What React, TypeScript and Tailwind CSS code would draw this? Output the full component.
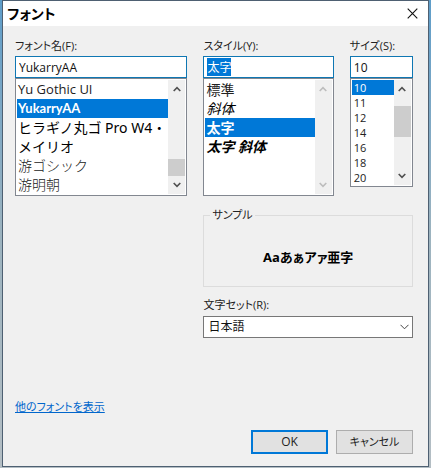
import { useEffect, useRef, useState } from "react";
import type { ReactNode } from "react";

type Item = { text: string; look?: string };

const fontItems: Item[] = [
  { text: "Yu Gothic UI", look: "text-[13px] text-[#222]" },
  { text: "YukarryAA", look: "font-['Lato','Noto_Sans_CJK_JP',sans-serif] font-bold text-[13px]" },
  { text: "ヒラギノ丸ゴ Pro W4・", look: "font-['Noto_Sans','Noto_Sans_CJK_JP',sans-serif] text-sm text-black [font-feature-settings:normal]" },
  { text: "メイリオ", look: "text-sm text-black [font-feature-settings:normal]" },
  { text: "游ゴシック", look: "text-sm font-light text-[#222] [font-feature-settings:normal]" },
  { text: "游明朝", look: "text-sm font-light text-[#222] [font-feature-settings:normal]" },
];

const styleItems: Item[] = [
  { text: "標準", look: "text-sm" },
  { text: "斜体", look: "text-sm italic text-black" },
  { text: "太字", look: "text-sm font-bold" },
  { text: "太字 斜体", look: "text-sm font-bold italic text-black" },
];

const sizeItems: Item[] = ["10", "11", "12", "14", "16", "18", "20"].map((text) => ({ text, look: "text-[11px]" }));

function Chevron({ down, faded }: { down?: boolean; faded?: boolean }) {
  return (
    <svg width="8" height="6" viewBox="0 0 8 6" fill="none" stroke={faded ? "#bdbdbd" : "#505050"} strokeWidth="1.6">
      <path d={down ? "M0.7 1L4 4.4L7.3 1" : "M0.7 5L4 1.6L7.3 5"} />
    </svg>
  );
}

function ListBox(props: {
  label: string;
  items: Item[];
  value: string;
  onPick: (value: string) => void;
  boxClass: string;
  rowClass: string;
  disabled?: boolean;
  thumb?: ReactNode;
}) {
  const { label, items, value, onPick, boxClass, rowClass, disabled, thumb } = props;
  return (
    <div className={`flex border border-[#828790] bg-white p-px ${boxClass}`}>
      <ul role="listbox" aria-label={label} className="min-w-0 flex-1 overflow-hidden">
        {items.map((item) => {
          const selected = item.text === value;
          return (
            <li
              key={item.text}
              role="option"
              aria-selected={selected}
              onClick={() => onPick(item.text)}
              className={`overflow-hidden whitespace-nowrap ${rowClass} ${item.look ?? ""} ${selected ? "bg-[#0078d7] text-white" : ""}`}
            >
              {item.text}
            </li>
          );
        })}
      </ul>
      <div className="flex w-[17px] shrink-0 flex-col bg-[#f0f0f0]">
        <button type="button" aria-label="上へ" disabled={disabled} className="flex h-[18px] items-center justify-center">
          <Chevron faded={disabled} />
        </button>
        <div className="flex flex-1 flex-col">{thumb}</div>
        <button type="button" aria-label="下へ" disabled={disabled} className="flex h-[18px] items-center justify-center">
          <Chevron down faded={disabled} />
        </button>
      </div>
    </div>
  );
}

const field = "block h-[22px] w-full min-w-0 border border-[#0f77b3] bg-white px-[3px] text-xs text-[#111] outline-none selection:bg-[#0078d7] selection:text-white";
const label = "block h-3.5 text-[11px] leading-3.5 whitespace-nowrap";

export default function App() {
  const [font, setFont] = useState("YukarryAA");
  const [style, setStyle] = useState("太字");
  const [size, setSize] = useState("10");
  const styleRef = useRef<HTMLInputElement>(null);

  useEffect(() => {
    styleRef.current?.focus();
    styleRef.current?.select();
  }, []);

  return (
    <div className="flex min-h-screen flex-col bg-linear-to-b from-[#5e9dc9] via-[#9cb3bf] to-[#b4bec4] px-0.5 pb-px font-['Open_Sans','Noto_Sans_CJK_JP',sans-serif] text-[#222] [font-feature-settings:'palt']">
      <section aria-labelledby="title" className="flex flex-1 flex-col border border-[#4e6072] bg-[#f0f0f0]">
        <header className="flex h-[25px] items-center justify-between bg-white pr-2 pl-1">
          <h1 id="title" className="text-sm leading-5 font-bold text-black">フォント</h1>
          <button type="button" aria-label="閉じる" className="flex size-4 items-center justify-center">
            <svg width="11" height="11" viewBox="0 0 11 11" stroke="#111" strokeWidth="1.1">
              <path d="M0.7 0.7L10.3 10.3M10.3 0.7L0.7 10.3" />
            </svg>
          </button>
        </header>

        <form className="flex flex-1 flex-col pt-[13px] pr-[15px] pl-3" onSubmit={(e) => e.preventDefault()}>
          <div className="grid grid-cols-[172fr_130fr_63fr] items-start gap-x-4">
            <div>
              <label htmlFor="font" className={label}>フォント名(F):</label>
              <input id="font" className={`mt-[3px] ${field}`} value={font} onChange={(e) => setFont(e.target.value)} />
              <ListBox
                label="フォント名"
                items={fontItems}
                value={font}
                onPick={setFont}
                boxClass="h-[118px]"
                rowClass="h-[19px] px-px leading-[19px]"
                thumb={<div className="mt-auto h-[17px] bg-[#cdcdcd]" />}
              />
            </div>
            <div>
              <label htmlFor="style" className={label}>スタイル(Y):</label>
              <input id="style" ref={styleRef} className={`mt-[3px] ${field}`} value={style} onChange={(e) => setStyle(e.target.value)} />
              <ListBox
                label="スタイル"
                items={styleItems}
                value={style}
                onPick={setStyle}
                boxClass="h-[118px]"
                rowClass="h-[19px] px-px leading-[19px]"
                disabled
              />
            </div>
            <div>
              <label htmlFor="size" className={label}>サイズ(S):</label>
              <input id="size" className={`mt-[3px] ${field}`} value={size} onChange={(e) => setSize(e.target.value)} />
              <ListBox
                label="サイズ"
                items={sizeItems}
                value={size}
                onPick={setSize}
                boxClass="h-[109px]"
                rowClass="h-[15px] px-0.5 leading-[15px]"
                thumb={<div className="mt-2 h-[31px] bg-[#cdcdcd]" />}
              />
            </div>

            <div className="col-span-2 col-start-2 flex flex-col pt-[11px]">
              <fieldset className="h-20 border border-[#dcdcdc] px-1.5">
                <legend className="px-0.5 text-[11px] leading-4">サンプル</legend>
                <p className="pt-6 text-center text-[13px] leading-5 font-bold text-black">Aaあぁアァ亜字</p>
              </fieldset>
              <label htmlFor="charset" className={`mt-[11px] ${label}`}>文字セット(R):</label>
              <div className="mt-1 grid items-center">
                <select id="charset" className="col-start-1 row-start-1 h-[22px] appearance-none border border-[#777] bg-white px-1 text-xs leading-5 text-[#111]">
                  <option>日本語</option>
                </select>
                <svg className="pointer-events-none col-start-1 row-start-1 mr-1 justify-self-end" width="9" height="6" viewBox="0 0 9 6" fill="none" stroke="#444">
                  <path d="M0.5 0.8L4.5 4.8L8.5 0.8" />
                </svg>
              </div>
            </div>
          </div>

          <a href="#more" className="mt-auto mb-[13px] self-start text-[11px] leading-5 text-[#0066cc] underline">他のフォントを表示</a>
          <footer className="flex justify-end gap-2 pb-3">
            <button type="submit" className="h-6 w-[77px] border-2 border-[#0078d7] bg-[#e1e1e1] text-xs">OK</button>
            <button type="button" className="h-6 w-[77px] border border-[#adadad] bg-[#e1e1e1] text-[11px]">キャンセル</button>
          </footer>
        </form>
      </section>
    </div>
  );
}
